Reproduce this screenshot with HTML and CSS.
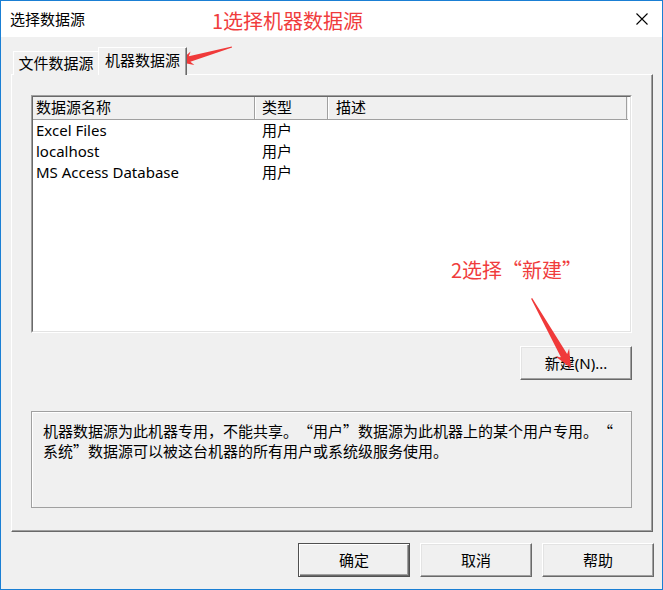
FILE: index.html
```html
<!DOCTYPE html>
<html lang="zh-CN">
<head>
<meta charset="utf-8">
<title>选择数据源</title>
<link rel="stylesheet" href="styles.css">
</head>
<body>
<div class="window">
  <div class="titlebar">
    <span class="title">选择数据源</span>
    <svg class="close" width="12" height="12" viewBox="0 0 12 12"><path d="M0.5 0.5 L11.5 11.5 M11.5 0.5 L0.5 11.5" stroke="#000" stroke-width="1.1" fill="none"/></svg>
  </div>
  <div class="client">
    <div class="tabs">
      <div class="tab">文件数据源</div>
      <div class="tab active">机器数据源</div>
    </div>
    <div class="panel">
      <div class="list">
        <div class="list-inner">
          <div class="header">
            <div class="hcell c1">数据源名称</div>
            <div class="hcell c2">类型</div>
            <div class="hcell c3">描述</div>
          </div>
          <div class="row"><span class="cell c1">Excel Files</span><span class="cell c2">用户</span></div>
          <div class="row"><span class="cell c1">localhost</span><span class="cell c2">用户</span></div>
          <div class="row"><span class="cell c1">MS Access Database</span><span class="cell c2">用户</span></div>
        </div>
      </div>
      <div class="actions"><button class="btn">新建(N)...</button></div>
      <div class="desc">
        <div class="line">机器数据源为此机器专用，不能共享。“用户”数据源为此机器上的某个用户专用。“</div>
        <div class="line">系统”数据源可以被这台机器的所有用户或系统级服务使用。</div>
      </div>
    </div>
    <div class="footer">
      <button class="btn default">确定</button>
      <button class="btn">取消</button>
      <button class="btn">帮助</button>
    </div>
  </div>
  <div class="note note1">1选择机器数据源</div>
  <div class="note note2">2选择“新建”</div>
  <svg class="arrows" width="663" height="590" viewBox="0 0 663 590">
    <polygon transform="translate(179 62) rotate(164.2)" points="0,0 -14,-7 -11,-2.8 -55,-0.6 -55,0.6 -11,2.8 -14,7" fill="#f03a3a"/>
    <polygon transform="translate(571 368) rotate(60.5)" points="0,0 -18,-8 -14,-3.5 -80,-0.6 -80,0.6 -14,3.5 -18,8" fill="#f03a3a"/>
  </svg>
</div>
</body>
</html>
```
FILE: styles.css
```css
* { box-sizing: border-box; }
html, body { margin: 0; padding: 0; }
body {
  width: 663px;
  height: 590px;
  overflow: hidden;
  font-family: "Noto Sans", "Noto Sans CJK SC", sans-serif;
  font-size: 15px;
  color: #000;
  background: #fff;
  text-spacing-trim: space-all;
}
.window {
  position: relative;
  width: 663px;
  height: 590px;
  border: 1px solid #1a7fd4;
  background: #f0f0f0;
  display: flex;
  flex-direction: column;
}
.titlebar {
  height: 36px;
  flex: none;
  background: #fff;
  display: flex;
  align-items: center;
  justify-content: space-between;
  padding: 0 14px 0 9px;
}
.title { font-size: 15px; line-height: 1; }
.close { display: block; }
.client {
  display: flex;
  flex-direction: column;
  padding-left: 10px;
}
.tabs {
  margin-top: 11px;
  height: 27px;
  display: flex;
  align-items: flex-end;
  padding-left: 2px;
  margin-bottom: -1px;
  position: relative;
  z-index: 1;
}
.tab {
  height: 24px;
  width: 85px;
  display: flex;
  align-items: center;
  justify-content: center;
  line-height: 1;
  background: #f0f0f0;
  border-top: 1px solid #fff;
  border-left: 1px solid #fff;
  padding-bottom: 1px;
}
.tab.active {
  height: 28px;
  width: 89px;
  border-right: 1px solid #696969;
  box-shadow: inset -1px 0 #a0a0a0;
  padding-bottom: 3px;
}
.panel {
  width: 642px;
  height: 458px;
  border-top: 1px solid #fff;
  border-left: 1px solid #fff;
  border-right: 1px solid #696969;
  border-bottom: 1px solid #696969;
  box-shadow: inset -1px -1px #a0a0a0;
  padding: 20px 20px 0 19px;
  display: flex;
  flex-direction: column;
}
.list {
  height: 238px;
  border: 1px solid;
  border-color: #a0a0a0 #fff #fff #a0a0a0;
  background: #fff;
}
.list-inner {
  height: 100%;
  border: 1px solid;
  border-color: #696969 #e3e3e3 #e3e3e3 #696969;
}
.header {
  display: flex;
  height: 23px;
  background: #f0f0f0;
  border-bottom: 1px solid #a0a0a0;
  margin-right: 2px;
}
.hcell {
  height: 22px;
  line-height: 21px;
  border-right: 1px solid #a0a0a0;
  border-left: 1px solid #fff;
  white-space: nowrap;
}
.header .c1 { width: 222px; padding-left: 3px; border-left: none; }
.header .c2 { width: 73px; padding-left: 6px; }
.header .c3 { width: 299px; padding-left: 7px; }
.row {
  display: flex;
  height: 21px;
  line-height: 21px;
  white-space: nowrap;
}
.cell.c1 { width: 222px; padding-left: 3px; }
.cell.c2 { width: 73px; padding-left: 7px; }
.actions {
  margin-top: 13px;
  display: flex;
  justify-content: flex-end;
}
.btn {
  width: 112px;
  height: 34px;
  font-family: "Noto Sans", "Noto Sans CJK SC", sans-serif;
  font-size: 15px;
  line-height: 1;
  color: #000;
  background: #f0f0f0;
  border: 1px solid;
  border-color: #fff #696969 #696969 #fff;
  box-shadow: inset -1px -1px #a0a0a0, inset 1px 1px #e3e3e3;
  padding: 0;
  margin: 0;
}
.btn.default {
  border-color: #505050;
  box-shadow: inset 1px 1px #fff, inset -1px -1px #696969, inset -2px -2px #a0a0a0;
}
.desc {
  margin-top: 31px;
  height: 97px;
  border: 1px solid #a0a0a0;
  box-shadow: inset 1px 1px #fff;
  padding: 9px 0 0 11px;
  font-family: "Noto Sans CJK SC", sans-serif;
}
.line {
  line-height: 20px;
  white-space: nowrap;
}
.footer {
  margin-top: 11px;
  display: flex;
  justify-content: flex-end;
  gap: 10px;
  padding-right: 8px;
}
.note {
  position: absolute;
  color: #f03c3c;
  font-family: "Noto Sans CJK SC", sans-serif;
  font-size: 20px;
  line-height: 24px;
  white-space: nowrap;
}
.note1 { left: 211px; top: 8px; }
.note2 { left: 450px; top: 257px; }
.arrows {
  position: absolute;
  left: -1px;
  top: -1px;
  pointer-events: none;
}
```
